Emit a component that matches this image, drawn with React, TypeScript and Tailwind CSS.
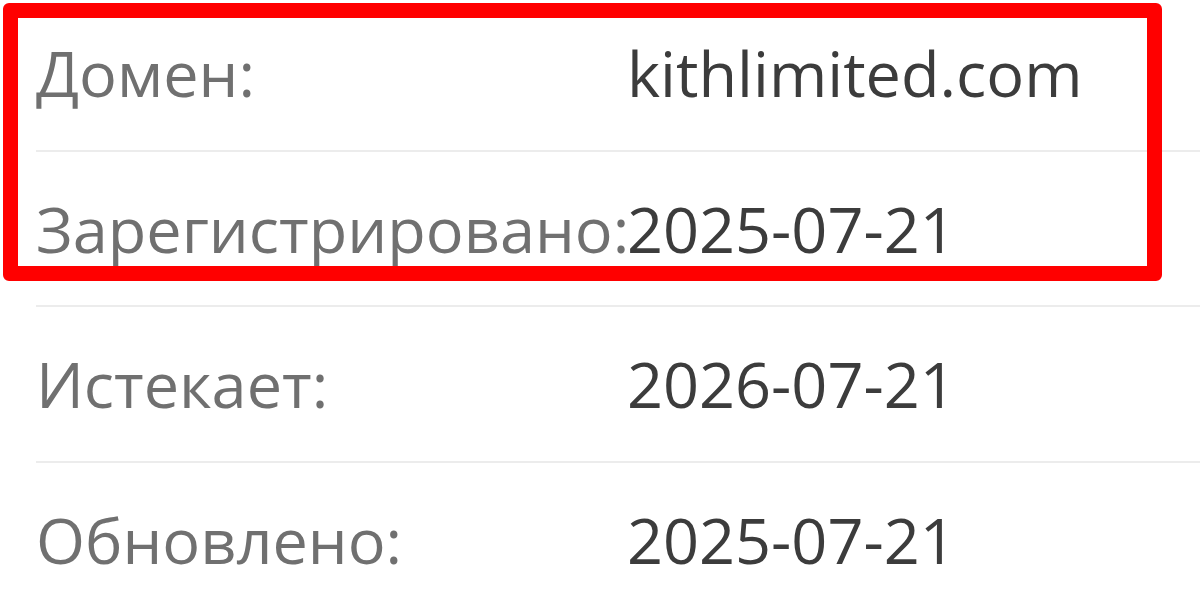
const rows = [
  { label: "Домен:", value: "kithlimited.com" },
  { label: "Зарегистрировано:", value: "2025-07-21" },
  { label: "Истекает:", value: "2026-07-21" },
  { label: "Обновлено:", value: "2025-07-21" },
];

export default function App() {
  return (
    <div
      className="relative h-[600px] w-[1200px] overflow-hidden bg-white"
      style={{ fontFamily: '"Open Sans", "Noto Sans", sans-serif' }}
    >
      {/* Whois table */}
      <div className="mt-[-4px] pl-[36px]">
        {rows.map((row) => (
          <div
            key={row.label}
            className="flex h-[155.5px] items-center border-b-2 border-[#ececec] text-[63px] leading-none"
          >
            <span className="w-[591px] shrink-0 whitespace-nowrap text-[#707070]">{row.label}</span>
            <span className="whitespace-nowrap text-[#3c3c3c]">{row.value}</span>
          </div>
        ))}
      </div>

      {/* Highlight frame */}
      <div className="pointer-events-none absolute left-[3px] top-[3px] h-[278px] w-[1159px] rounded-[6px] border-[15px] border-[#ff0000]" />
    </div>
  );
}
